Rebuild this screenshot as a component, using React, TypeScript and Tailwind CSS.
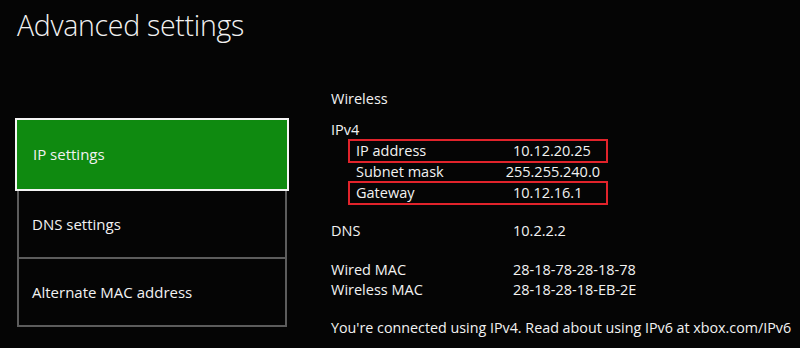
const MENU = [
  { label: "IP settings", active: true },
  { label: "DNS settings", active: false },
  { label: "Alternate MAC address", active: false },
];

const IPV4 = [
  { label: "IP address", value: "10.12.20.25", boxed: true },
  { label: "Subnet mask", value: "255.255.240.0", boxed: false },
  { label: "Gateway", value: "10.12.16.1", boxed: true },
];

function Row({ label, value, className = "" }: { label: string; value: string; className?: string }) {
  return (
    <div className={`flex h-[20px] items-center ${className}`}>
      <span className="w-[182px]">{label}</span>
      <span>{value}</span>
    </div>
  );
}

export default function App() {
  return (
    <div
      className="h-[348px] w-[800px] overflow-hidden bg-[#050505] text-[#f2f2f2]"
      style={{ fontFamily: '"Open Sans", "Noto Sans", sans-serif' }}
    >
      <h1 className="pl-[17px] pt-[3px] text-[28.5px] font-light leading-[44px] tracking-[-0.3px]">Advanced settings</h1>

      <div className="mt-[42px] flex">
        <nav className="ml-[15px] mt-[29px] flex w-[274px] flex-col">
          {MENU.map((item) =>
            item.active ? (
              <div
                key={item.label}
                className="flex h-[73px] items-center border-2 border-[#f5f5f5] bg-[#0f8a10] pl-[16px] text-[15px]"
              >
                {item.label}
              </div>
            ) : (
              <div
                key={item.label}
                className="mx-[2px] flex h-[68px] items-center border-x-2 border-b-2 border-[#5c5c5c] pl-[13px] text-[15px]"
              >
                <span>{item.label}</span>
              </div>
            )
          )}
        </nav>

        <div className="ml-[42px] flex flex-col text-[14.5px]">
          <div className="flex h-[20px] items-center">Wireless</div>
          <div className="mt-[12px] flex h-[18px] items-center">IPv4</div>
          <div className="ml-[17px] flex w-[260px] flex-col">
            {IPV4.map((r) => (
              <div
                key={r.label}
                className={`flex items-center px-[6px] ${
                  r.boxed ? "h-[24px] border-2 border-[#e1232b]" : "h-[18px] border-x-2 border-transparent"
                }`}
              >
                <span className="w-[157px]">{r.label}</span>
                <span>{r.value}</span>
              </div>
            ))}
          </div>
          <Row label="DNS" value="10.2.2.2" className="mt-[16px]" />
          <Row label="Wired MAC" value="28-18-78-28-18-78" className="mt-[19px]" />
          <Row label="Wireless MAC" value="28-18-28-18-EB-2E" />
          <div className="mt-[18px] flex h-[20px] items-center whitespace-nowrap text-[14.3px]">
            You're connected using IPv4. Read about using IPv6 at xbox.com/IPv6
          </div>
        </div>
      </div>
    </div>
  );
}
